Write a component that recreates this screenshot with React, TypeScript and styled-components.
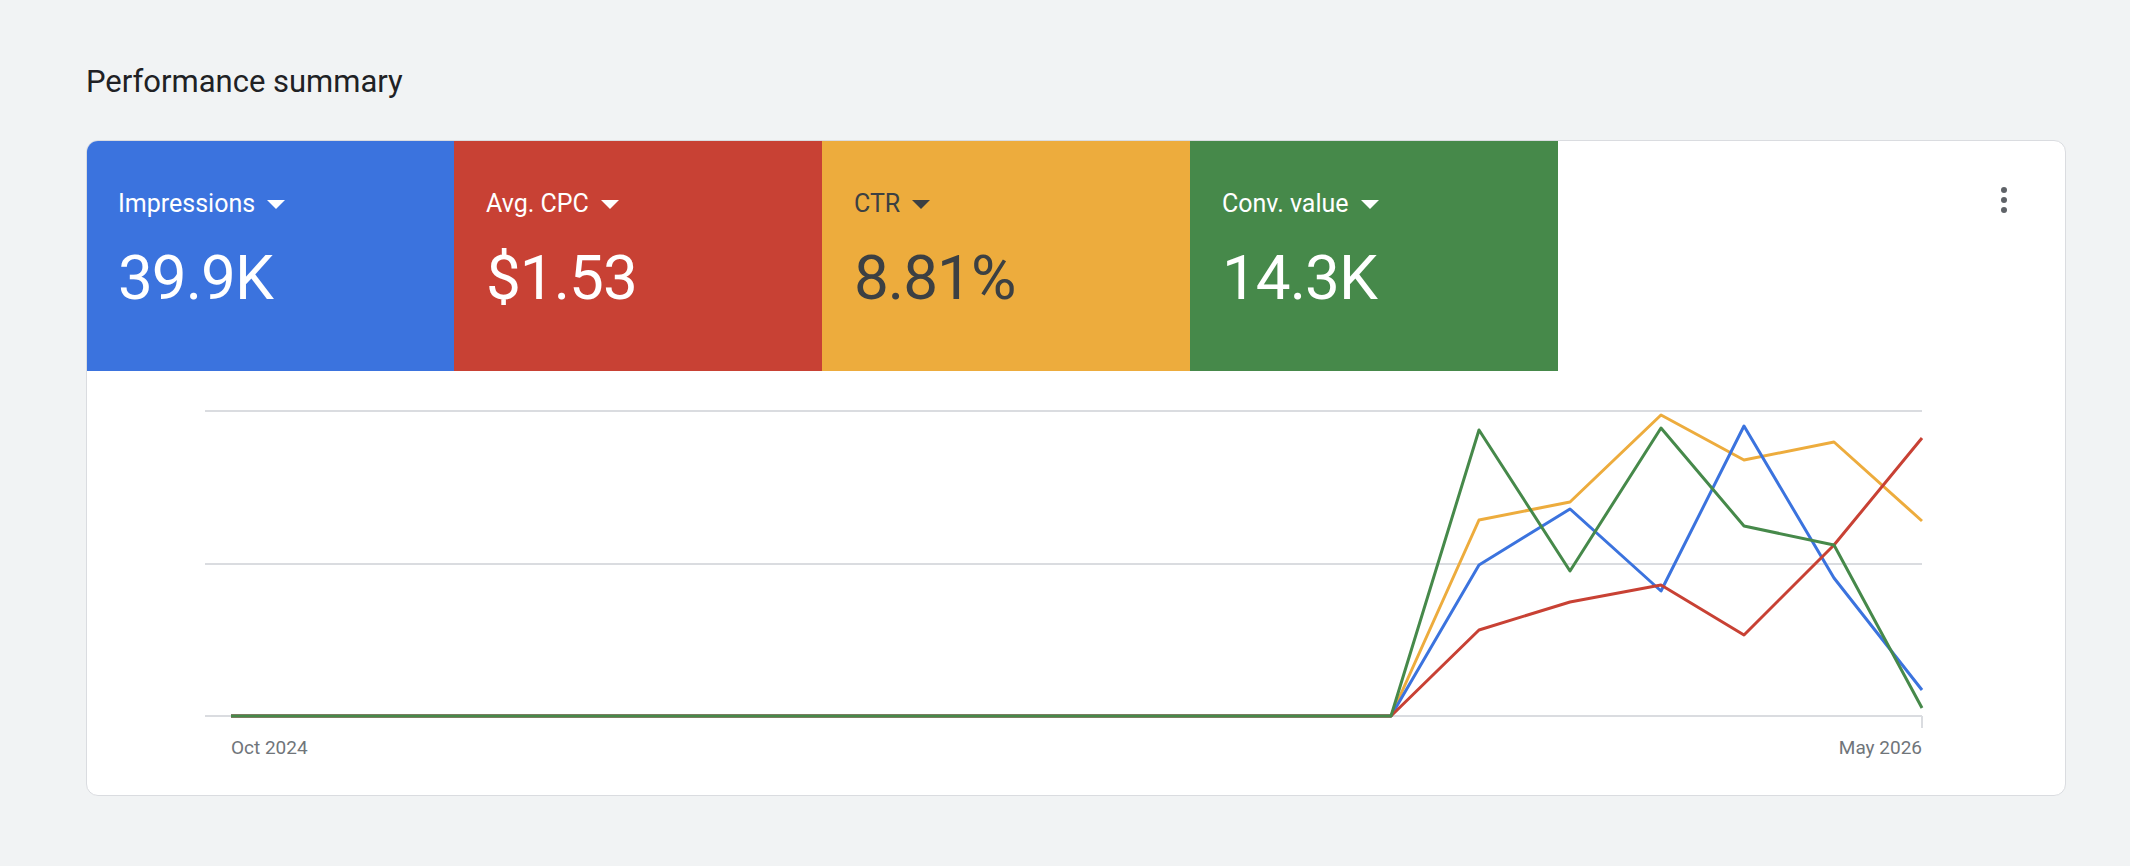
import React from "react";
import styled, { createGlobalStyle } from "styled-components";

const Global = createGlobalStyle`
  body { margin: 0; background: #f1f3f4; font-family: Roboto, "Liberation Sans", sans-serif; }
`;

const Page = styled.div`
  padding: 62px 64px 0 86px;
  width: 2130px;
  box-sizing: border-box;
`;

const Title = styled.h2`
  margin: 0 0 38px 0;
  font-size: 31px;
  line-height: 40px;
  font-weight: 400;
  color: #202124;
`;

const Card = styled.div`
  width: 1980px;
  height: 656px;
  box-sizing: border-box;
  background: #fff;
  border: 1px solid #dadce0;
  border-radius: 12px;
  overflow: hidden;
  display: flex;
  flex-direction: column;
  position: relative;
`;

const Tiles = styled.div`
  display: flex;
  height: 231px;
  margin-top: -1px;
  margin-left: -1px;
`;

const Tile = styled.div<{ $bg: string; $fg: string }>`
  width: 368px;
  background: ${(p) => p.$bg};
  color: ${(p) => p.$fg};
  padding: 48px 0 0 32px;
  box-sizing: border-box;
`;

const Label = styled.div`
  display: flex;
  align-items: center;
  gap: 12px;
  font-size: 25px;
  line-height: 32px;
`;

const Caret = styled.span`
  width: 0;
  height: 0;
  border-left: 9px solid transparent;
  border-right: 9px solid transparent;
  border-top: 9px solid currentColor;
`;

const Value = styled.div`
  margin-top: 22px;
  font-size: 62px;
  line-height: 72px;
  letter-spacing: -1px;
`;

const Kebab = styled.div`
  position: absolute;
  right: 58px;
  top: 46px;
  display: flex;
  flex-direction: column;
  gap: 4px;
  & span { width: 6px; height: 6px; border-radius: 50%; background: #5f6368; }
`;

const Chart = styled.svg`
  display: block;
  flex: 1;
`;

const X = [1391, 1479, 1570, 1661, 1744, 1834, 1922];
const series = [
  { c: "#edac3d", y: [718, 522, 504, 417, 462, 444, 523] },
  { c: "#3b73de", y: [718, 567, 511, 593, 428, 580, 692] },
  { c: "#c84134", y: [718, 632, 604, 587, 637, 547, 440] },
  { c: "#46894a", y: [718, 432, 573, 430, 528, 547, 710] },
];
const ox = 87, oy = 373;

export default function App() {
  const tiles = [
    { l: "Impressions", v: "39.9K", bg: "#3b73de", fg: "#fff" },
    { l: "Avg. CPC", v: "$1.53", bg: "#c84134", fg: "#fff" },
    { l: "CTR", v: "8.81%", bg: "#edac3d", fg: "#3c4043" },
    { l: "Conv. value", v: "14.3K", bg: "#46894a", fg: "#fff" },
  ];
  return (
    <Page>
      <Global />
      <Title>Performance summary</Title>
      <Card>
        <Tiles>
          {tiles.map((t) => (
            <Tile key={t.l} $bg={t.bg} $fg={t.fg}>
              <Label>{t.l}<Caret /></Label>
              <Value>{t.v}</Value>
            </Tile>
          ))}
        </Tiles>
        <Kebab><span /><span /><span /></Kebab>
        <Chart width="1978" height="424" viewBox="0 0 1978 424">
          {[413, 566, 718].map((y) => (
            <line key={y} x1={205 - ox} x2={1922 - ox} y1={y - oy} y2={y - oy} stroke="#dadce0" strokeWidth="2" />
          ))}
          <line x1={1922 - ox} x2={1922 - ox} y1={718 - oy} y2={730 - oy} stroke="#dadce0" strokeWidth="2" />
          {series.map((s) => (
            <polyline
              key={s.c}
              fill="none"
              stroke={s.c}
              strokeWidth="3"
              strokeLinejoin="round"
              points={[`${231 - ox},${718 - oy}`, ...X.map((x, i) => `${x - ox},${s.y[i] - oy}`)].join(" ")}
            />
          ))}
          <text x={231 - ox} y={756 - oy} fontSize="19" fill="#70757a" fontFamily="Roboto, sans-serif">Oct 2024</text>
          <text x={1922 - ox} y={756 - oy} fontSize="19" fill="#70757a" textAnchor="end" fontFamily="Roboto, sans-serif">May 2026</text>
        </Chart>
      </Card>
    </Page>
  );
}
